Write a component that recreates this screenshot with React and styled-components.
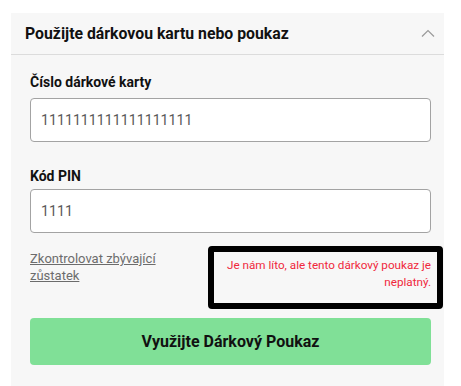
import React from "react";
import styled, { createGlobalStyle } from "styled-components";

const Global = createGlobalStyle`
  html, body { margin: 0; padding: 0; background: #ffffff; }
  body { font-family: Roboto, "Liberation Sans", Arial, sans-serif; }
  * { box-sizing: border-box; }
`;

const Page = styled.div`
  padding: 13px 17px 0 11px;
`;

const Panel = styled.section`
  background: #f7f7f7;
`;

const Header = styled.div`
  height: 42px;
  display: flex;
  align-items: center;
  justify-content: space-between;
  padding: 0 9px 0 14px;
  border-bottom: 1px solid #dcdcdc;
`;

const Title = styled.h2`
  margin: 0;
  font-size: 15.8px;
  font-weight: 700;
  color: #111;
`;

const Chevron = styled.svg`
  width: 14px;
  height: 8px;
  display: block;
  margin-top: -2px;
`;

const Body = styled.div`
  padding: 17px 13px 21px 19px;
  display: flex;
  flex-direction: column;
`;

const Field = styled.div`
  display: flex;
  flex-direction: column;
  margin-top: ${(p) => p.$top || 0}px;
`;

const Label = styled.label`
  font-size: 14px;
  line-height: 20px;
  font-weight: 700;
  color: #111;
  margin-bottom: ${(p) => p.$gap}px;
`;

const Input = styled.input`
  height: 44px;
  width: 100%;
  border: 1px solid #a3a3a3;
  border-radius: 4px;
  background: #fff;
  padding: 0 10px;
  font-family: inherit;
  font-size: 14.2px;
  color: #5a5a5a;
  outline: none;
`;

const Row = styled.div`
  display: flex;
  justify-content: space-between;
  align-items: flex-start;
  margin-top: 13px;
`;

const Link = styled.a`
  width: 160px;
  padding-top: 4px;
  font-size: 13px;
  line-height: 17px;
  color: #6c6c6c;
  text-decoration: underline;
`;

const ErrorBox = styled.div`
  width: 235px;
  height: 63px;
  margin-right: -12px;
  border: 6px solid #000;
  border-radius: 4px;
  padding: 5px 6px 0 6px;
  text-align: right;
  font-size: 11.7px;
  line-height: 17px;
  color: #f0283c;
`;

const Button = styled.button`
  margin-top: 9px;
  height: 47px;
  width: 100%;
  border: none;
  border-radius: 4px;
  background: #80e097;
  font-family: inherit;
  font-size: 16px;
  font-weight: 700;
  color: #111;
`;

export default function App() {
  return (
    <>
      <Global />
      <Page>
        <Panel>
          <Header>
            <Title>Použijte dárkovou kartu nebo poukaz</Title>
            <Chevron viewBox="0 0 14 8">
              <polyline points="1,7.5 7,1.5 13,7.5" fill="none" stroke="#9a9a9a" strokeWidth="1.2" />
            </Chevron>
          </Header>
          <Body>
            <Field>
              <Label $gap={6}>Číslo dárkové karty</Label>
              <Input defaultValue="1111111111111111111" />
            </Field>
            <Field $top={24}>
              <Label $gap={3}>Kód PIN</Label>
              <Input defaultValue="1111" />
            </Field>
            <Row>
              <Link href="#">Zkontrolovat zbývající zůstatek</Link>
              <ErrorBox>Je nám líto, ale tento dárkový poukaz je neplatný.</ErrorBox>
            </Row>
            <Button>Využijte Dárkový Poukaz</Button>
          </Body>
        </Panel>
      </Page>
    </>
  );
}
